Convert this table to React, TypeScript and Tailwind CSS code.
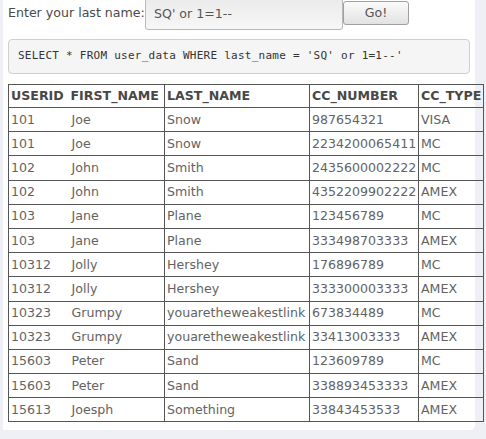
import React from "react";

const rows = [
  ["101", "Joe", "Snow", "987654321", "VISA"],
  ["101", "Joe", "Snow", "2234200065411", "MC"],
  ["102", "John", "Smith", "2435600002222", "MC"],
  ["102", "John", "Smith", "4352209902222", "AMEX"],
  ["103", "Jane", "Plane", "123456789", "MC"],
  ["103", "Jane", "Plane", "333498703333", "AMEX"],
  ["10312", "Jolly", "Hershey", "176896789", "MC"],
  ["10312", "Jolly", "Hershey", "333300003333", "AMEX"],
  ["10323", "Grumpy", "youaretheweakestlink", "673834489", "MC"],
  ["10323", "Grumpy", "youaretheweakestlink", "33413003333", "AMEX"],
  ["15603", "Peter", "Sand", "123609789", "MC"],
  ["15603", "Peter", "Sand", "338893453333", "AMEX"],
  ["15613", "Joesph", "Something", "33843453533", "AMEX"],
];

const headers = ["USERID", "FIRST_NAME", "LAST_NAME", "CC_NUMBER", "CC_TYPE"];
const widths = ["w-[60px]", "w-[96px]", "w-[145px]", "w-[109px]", "w-[65px]"];
const sides = ["border-l", "", "border-l", "border-l", "border-l border-r"];

export default function App() {
  return (
    <div className="w-[486px] h-[439px] overflow-hidden bg-[#eef0f5] font-['DejaVu_Sans',sans-serif] text-[12.6px] text-[#636363]">
      <div className="ml-[3px] w-[472px] h-[430px] bg-white rounded-br-[5px] pl-[5px] pt-0">
        <div className="flex items-start h-[36px]">
          <label className="w-[137px] mt-[4px] text-[#4a4a4a] leading-[18px] whitespace-nowrap">Enter your last name:</label>
          <div className="-mt-[2px] w-[198px] h-[32px] border border-[#b8b8b8] rounded-[3px] bg-gradient-to-b from-[#ebebeb] to-[#f7f7f7] pl-[8px] pt-[6px] leading-[18px] text-[#555]">
            SQ' or 1=1--
          </div>
          <button className="mt-px w-[66px] h-[24px] border border-[#a0a0a0] rounded-[3px] bg-gradient-to-b from-[#fbfbfb] to-[#e2e2e2] text-[#555] text-[12.6px] leading-[18px]">
            Go!
          </button>
        </div>
        <div className="mt-[3px] w-[462px] h-[35px] border border-[#cfcfcf] rounded-[4px] bg-[#f5f5f5] pl-[9px] flex items-center font-['DejaVu_Sans_Mono',monospace] text-[11px] tracking-[0.25px] text-[#333]">
          SELECT * FROM user_data WHERE last_name = 'SQ' or 1=1--'
        </div>
        <table className="mt-[10px] border-collapse table-fixed w-[475px] border-t border-b border-[#555]">
          <thead>
            <tr className="h-[23px]">
              {headers.map((h, i) => (
                <th
                  key={h}
                  className={`${widths[i]} ${sides[i]} border-[#555] text-left font-bold text-[#484848] px-[2px] leading-[18px] whitespace-nowrap overflow-hidden`}
                >
                  {h}
                </th>
              ))}
            </tr>
          </thead>
          <tbody>
            {rows.map((r, ri) => (
              <tr key={ri} className="h-[24.2px] border-t border-[#555]">
                {r.map((c, i) => (
                  <td
                    key={i}
                    className={`${sides[i]} border-[#555] ${i === 1 ? "pl-[3px]" : "px-[2px]"} leading-[18px] whitespace-nowrap`}
                  >
                    {c}
                  </td>
                ))}
              </tr>
            ))}
          </tbody>
        </table>
      </div>
    </div>
  );
}
